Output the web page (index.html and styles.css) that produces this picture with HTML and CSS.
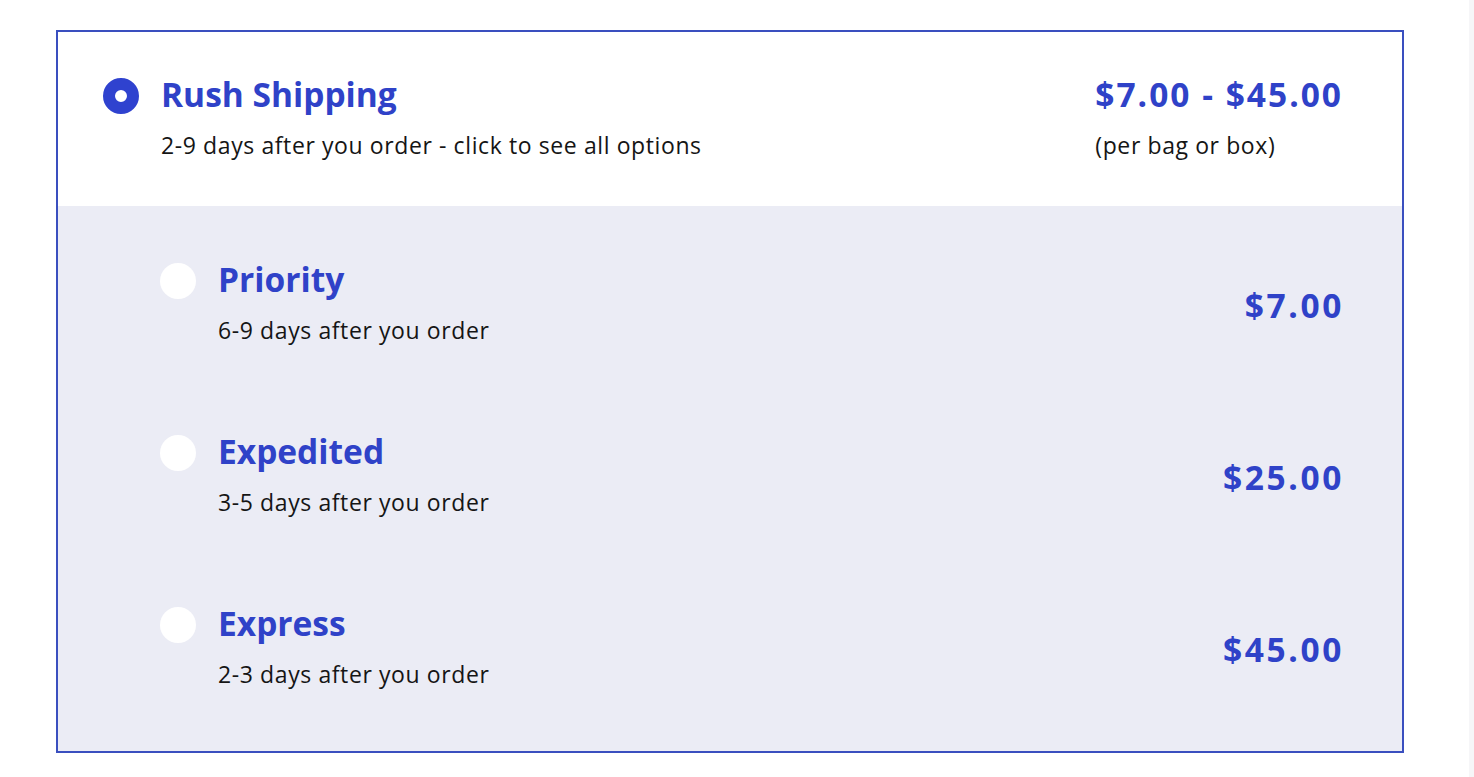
FILE: index.html
```html
<!DOCTYPE html>
<html>
<head>
<meta charset="utf-8">
<title>Shipping</title>
<link rel="stylesheet" href="styles.css">
</head>
<body>
<div class="page">
    <div class="ship">
        <div class="ship_head">
            <div class="opt">
                <span class="radio on"></span>
                <div class="txt">
                    <div class="name">Rush Shipping</div>
                    <div class="desc">2-9 days after you order - click to see all options</div>
                </div>
            </div>
            <div class="range">
                <div class="price">$7.00 - $45.00</div>
                <div class="desc">(per bag or box)</div>
            </div>
        </div>
        <div class="ship_list">
            <div class="row">
                <div class="opt">
                    <span class="radio"></span>
                    <div class="txt">
                        <div class="name">Priority</div>
                        <div class="desc">6-9 days after you order</div>
                    </div>
                </div>
                <div class="price">$7.00</div>
            </div>
            <div class="row">
                <div class="opt">
                    <span class="radio"></span>
                    <div class="txt">
                        <div class="name">Expedited</div>
                        <div class="desc">3-5 days after you order</div>
                    </div>
                </div>
                <div class="price">$25.00</div>
            </div>
            <div class="row">
                <div class="opt">
                    <span class="radio"></span>
                    <div class="txt">
                        <div class="name">Express</div>
                        <div class="desc">2-3 days after you order</div>
                    </div>
                </div>
                <div class="price">$45.00</div>
            </div>
        </div>
    </div>
    <div class="side"></div>
</div>
</body>
</html>
```

FILE: styles.css
```css
body{margin:0;padding:0;background-color:#fff;font-family:'Open Sans','Liberation Sans',sans-serif;color:#111;}
.page{display:flex;height:777px;}
.ship{box-sizing:border-box;width:1348px;height:723px;margin:30px 0 0 56px;border:2px solid #3a4fbf;display:flex;flex-direction:column;}
.side{margin-left:auto;width:5px;background-color:#f6f6f8;}
.ship_head{flex:none;box-sizing:border-box;height:174px;padding:46px 61px 0 45px;display:flex;justify-content:space-between;align-items:flex-start;background-color:#fff;}
.ship_list{flex:1;background-color:#ebecf5;padding:58px 61px 0 102px;display:flex;flex-direction:column;gap:92px;}
.row{height:80px;display:flex;justify-content:space-between;align-items:center;}
.opt{display:flex;align-items:flex-start;}
.radio{width:36px;height:36px;border-radius:50%;background-color:#fff;flex:none;box-sizing:border-box;}
.radio.on{border:12px solid #2f42cf;}
.txt{margin-left:22px;}
.name{font-size:33.5px;line-height:36px;margin-top:-2px;font-weight:bold;color:#2f42c8;}
.desc{font-size:23px;line-height:30px;margin-top:18px;letter-spacing:0.6px;color:#151515;}
.price{font-size:33.5px;line-height:36px;font-weight:bold;letter-spacing:2px;margin-right:-2px;color:#2f42c8;}
.row .price{letter-spacing:2.6px;margin-right:-3px;margin-top:2px;}
.range .price{margin-top:-2px;}
```
